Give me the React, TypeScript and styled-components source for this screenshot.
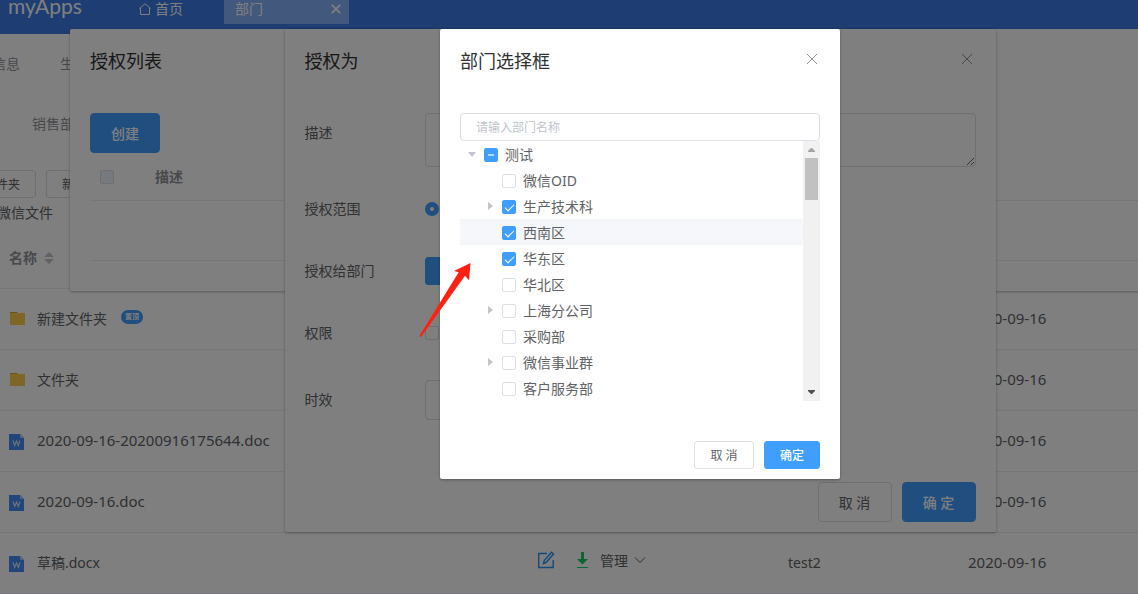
import React from "react";
import styled, { createGlobalStyle, css } from "styled-components";

const GlobalStyle = createGlobalStyle`
  * { box-sizing: border-box; }
  body {
    margin: 0;
    background: #fff;
    color: #606266;
    font: 14px/20px "Noto Sans", "Noto Sans CJK SC", sans-serif;
  }
  button, input, textarea { font-family: inherit; margin: 0; }
`;

const Viewport = styled.div`
  overflow: hidden;
  min-height: 100vh;
`;

const Shell = styled.div`
  position: relative;
  min-width: 1280px;
  min-height: 100vh;
`;

/* ---------- page header ---------- */

const Header = styled.header`
  display: flex;
  align-items: flex-start;
  height: 34px;
  background: #3c7ae4;
  color: #fff;
`;

const HeaderItem = styled.div`
  display: flex;
  align-items: center;
  height: 24px;
  padding-bottom: 6px;
`;

const Logo = styled(HeaderItem)`
  width: 139px;
  padding: 0 0 12px 8px;
  font-family: Lato, sans-serif;
  font-size: 21px;
`;

const HomeLink = styled.a`
  display: flex;
  align-items: center;
  gap: 4px;
  width: 85px;
  height: 24px;
  padding-bottom: 6px;
  color: #fff;
  text-decoration: none;
`;

const PageTab = styled(HeaderItem)`
  justify-content: space-between;
  width: 125px;
  padding: 0 8px 6px 11px;
  background: #84b0fa;
`;

const IconButton = styled.button`
  display: flex;
  padding: 0;
  border: 0;
  background: none;
  color: inherit;
`;

/* ---------- file list page ---------- */

const SubNav = styled.nav`
  display: flex;
  align-items: center;
  gap: 40px;
  height: 60px;
  margin-left: -8px;
  color: #909399;
`;

const Crumb = styled.div`
  height: 60px;
  padding-left: 32px;
  line-height: 60px;
  color: #909399;
`;

const Toolbar = styled.div`
  display: flex;
  gap: 10px;
  margin-left: -20px;
  padding-top: 16px;
`;

const Folder = styled.div`
  height: 30px;
  margin-left: -3px;
  line-height: 30px;
  color: #606266;
`;

const FileTable = styled.table`
  width: 100%;
  table-layout: fixed;
  border-collapse: separate;
  border-spacing: 0;

  th, td {
    height: 61px;
    padding: 0;
    border-bottom: 1px solid #ebeef5;
    text-align: left;
  }
  th { color: #909399; }
`;

const HeadName = styled.div`
  display: flex;
  align-items: center;
  gap: 7px;
  padding-left: 9px;
`;

const FileName = styled.div`
  display: flex;
  align-items: center;
  gap: 12px;
  padding-left: 9px;
`;

const LatinText = styled.span`
  display: block;
  padding-bottom: 2px;
  font-size: 15px;
`;

const Badge = styled.span`
  height: 14px;
  padding: 0 4px;
  margin: 0 0 4px 2px;
  border-radius: 7px;
  background: #409eff;
  color: #fff;
  font-size: 7px;
  font-weight: 700;
  line-height: 14px;
`;

const Actions = styled.div`
  display: flex;
  align-items: center;
  padding-bottom: 6px;
`;

const EditButton = styled(IconButton)`
  width: 40px;
  color: #2196f3;
`;

const DownloadButton = styled(IconButton)`
  width: 23px;
  color: #13ce66;
`;

const ManageButton = styled(IconButton)`
  align-items: center;
  gap: 6px;
  font-size: 14px;
`;

/* ---------- shared controls ---------- */

const Button = styled.button<{ $primary?: boolean; $small?: boolean; $width: number }>`
  flex: none;
  width: ${(p) => p.$width}px;
  height: ${(p) => (p.$small ? 28 : 40)}px;
  padding: 0;
  border: 1px solid ${(p) => (p.$primary ? "#409eff" : "#dcdfe6")};
  border-radius: ${(p) => (p.$small ? 3 : 4)}px;
  background: ${(p) => (p.$primary ? "#409eff" : "#fff")};
  color: ${(p) => (p.$primary ? "#fff" : "#606266")};
  font-size: ${(p) => (p.$small ? 12 : 14)}px;
  font-weight: ${(p) => (p.$primary ? 500 : 400)};
`;

const checkedBox = css`
  border-color: #409eff;
  background: #409eff;
`;

const Checkbox = styled.input.attrs({ type: "checkbox" })<{ $partial?: boolean }>`
  position: relative;
  flex: none;
  appearance: none;
  width: 14px;
  height: 14px;
  border: 1px solid #dcdfe6;
  border-radius: 2px;
  background: #fff;

  &:disabled { background: #edf2fc; }

  &:checked { ${checkedBox} }
  &:checked::after {
    content: "";
    position: absolute;
    left: 4px;
    top: 1px;
    width: 4px;
    height: 8px;
    border: solid #fff;
    border-width: 0 1px 1px 0;
    transform: rotate(45deg);
  }

  ${(p) =>
    p.$partial &&
    css`
      ${checkedBox}
      &::after {
        content: "";
        position: absolute;
        left: 3px;
        top: 5px;
        width: 6px;
        height: 2px;
        background: #b3d8ff;
      }
    `}
`;

const Radio = styled.input.attrs({ type: "radio" })`
  appearance: none;
  width: 14px;
  height: 14px;
  border: 5px solid #409eff;
  border-radius: 50%;
  background: #fff;
`;

/* ---------- dialogs ---------- */

const Layer = styled.div<{ $mask?: boolean }>`
  position: absolute;
  inset: 0;
  display: flex;
  justify-content: center;
  align-items: flex-start;
  padding-top: 29px;
  background: ${(p) => (p.$mask ? "rgba(0, 0, 0, 0.5)" : "none")};
`;

const Dialog = styled.section<{ $width: number }>`
  width: ${(p) => p.$width}px;
  border-radius: 2px;
  background: #fff;
  box-shadow: 0 1px 3px rgba(0, 0, 0, 0.3);
`;

const DialogHeader = styled.header`
  display: flex;
  justify-content: space-between;
  padding: 20px 20px 10px;
  color: #909399;
`;

const Title = styled.h2`
  margin: 0;
  color: #303133;
  font-size: 18px;
  font-weight: 400;
  line-height: 24px;
`;

const CloseButton = styled(IconButton)`
  align-items: center;
  width: 17px;
  height: 20px;
  justify-content: center;
`;

const DialogBody = styled.div`
  padding: 30px 20px;
`;

const DialogFooter = styled.footer`
  display: flex;
  justify-content: flex-end;
  gap: 10px;
  padding: 10px 20px;
`;

const GrantTable = styled.table`
  width: 100%;
  table-layout: fixed;
  border-collapse: separate;
  border-spacing: 0;

  th, td {
    padding: 0 10px;
    border-bottom: 1px solid #ebeef5;
    text-align: left;
    color: #909399;
  }
  th { height: 48px; }
  td { height: 60px; }
  input { display: block; }
`;

const FormRow = styled.div<{ $height?: number; $gap?: number; $middle?: boolean }>`
  display: flex;
  align-items: ${(p) => (p.$middle ? "center" : "flex-start")};
  height: ${(p) => p.$height ?? 40}px;
  margin-bottom: ${(p) => p.$gap ?? 22}px;
`;

const FormLabel = styled.label`
  flex: none;
  width: 120px;
  line-height: 40px;
`;

const TextArea = styled.textarea`
  flex: 1;
  height: 54px;
  border: 1px solid #dcdfe6;
  border-radius: 4px;
  background: #fff;
  resize: vertical;
`;

const TextInput = styled.input`
  flex: 1;
  height: 40px;
  border: 1px solid #dcdfe6;
  border-radius: 4px;
  background: #fff;
`;

const PeriodInput = styled(TextInput)`
  max-width: 220px;
`;

const SearchInput = styled(TextInput)`
  display: block;
  width: 100%;
  height: 28px;
  padding: 0 15px;
  font-size: 12px;

  &::placeholder { color: #c0c4cc; opacity: 1; }
`;

const TreeBox = styled.div`
  display: flex;
  height: 260px;
`;

const Tree = styled.ul`
  flex: 1;
  margin: 0;
  padding: 0;
  list-style: none;
`;

const TreeRow = styled.li<{ $child?: boolean; $active?: boolean }>`
  display: flex;
  align-items: center;
  height: 26px;
  padding: 1px 0 0 ${(p) => (p.$child ? 18 : 0)}px;
  background: ${(p) => (p.$active ? "#f5f7fa" : "none")};
`;

const Caret = styled.span<{ $kind?: "open" | "closed" }>`
  width: 24px;
  display: flex;
  justify-content: center;

  &::before {
    content: "";
    border: 4px solid transparent;
    ${(p) =>
      p.$kind === "open" &&
      css`
        border-width: 5px 4px 0;
        border-top-color: #c0c4cc;
      `}
    ${(p) =>
      p.$kind === "closed" &&
      css`
        margin-bottom: 2px;
        border-width: 4px 0 4px 5px;
        border-left-color: #c0c4cc;
      `}
  }
`;

const TreeLabel = styled.label`
  padding-left: 7px;
`;

const ScrollBar = styled.div`
  display: flex;
  flex-direction: column;
  justify-content: space-between;
  align-items: center;
  width: 17px;
  background: #f1f1f1;
`;

const ScrollTop = styled.div`
  display: flex;
  flex-direction: column;
  align-items: center;

  svg { display: block; }
`;

const ScrollThumb = styled.div`
  width: 13px;
  height: 42px;
  background: #c1c1c1;
`;

const Pointer = styled.svg`
  position: absolute;
  left: 418px;
  top: 260px;
`;

const Cross = ({ size, weight = 1 }: { size: number; weight?: number }) => (
  <svg width={size} height={size} viewBox="0 0 12 12" fill="none" stroke="currentColor" strokeWidth={weight}>
    <path d="M1 1l10 10M11 1L1 11" />
  </svg>
);

const FolderIcon = () => (
  <svg width="16" height="16" viewBox="0 0 16 16">
    <path d="M1 1h7l1 1h7v4H1z" fill="#d9a828" />
    <path d="M1 2h15v12H1z" fill="#fccf4d" />
  </svg>
);

const DocIcon = () => (
  <svg width="16" height="18" viewBox="0 0 16 18">
    <path d="M0 2h11l4 4v12H0z" fill="#478df5" />
    <path d="M11 2l4 4h-4z" fill="#a4c6fa" />
    <path d="M4 8.500l1.700 5 1.800-4.500 1.800 4.500 1.700-5" fill="none" stroke="#dce9fd" strokeWidth="1.100" />
  </svg>
);

const ScrollArrow = ({ down }: { down?: boolean }) => (
  <svg width="17" height="17" viewBox="0 0 17 17">
    <path d={down ? "M5 6h7v1l-3 3H8L5 7z" : "M5 11h7v-1L9 7H8l-3 3z"} fill={down ? "#505050" : "#a3a3a3"} />
  </svg>
);

type FileItem = { name: string; kind: "folder" | "doc"; latin?: boolean; pinned?: boolean; owner?: string };

const files: FileItem[] = [
  { name: "新建文件夹", kind: "folder", pinned: true },
  { name: "文件夹", kind: "folder" },
  { name: "2020-09-16-20200916175644.doc", kind: "doc", latin: true },
  { name: "2020-09-16.doc", kind: "doc", latin: true },
  { name: "草稿.docx", kind: "doc", owner: "test2" },
];

type Dept = { name: string; checked?: boolean; expandable?: boolean; active?: boolean };

const departments: Dept[] = [
  { name: "微信OID" },
  { name: "生产技术科", checked: true, expandable: true },
  { name: "西南区", checked: true, active: true },
  { name: "华东区", checked: true },
  { name: "华北区" },
  { name: "上海分公司", expandable: true },
  { name: "采购部" },
  { name: "微信事业群", expandable: true },
  { name: "客户服务部" },
];

const RowActions = () => (
  <Actions>
    <EditButton aria-label="编辑">
      <svg width="18" height="18" viewBox="0 0 18 18" fill="none" stroke="currentColor" strokeWidth="1.4">
        <path d="M10 2.500H1.700v14h14.500V9" />
        <path d="M6.500 12.500l.7-3L14.500 1.300l2 1.700-7.200 8.300z" />
      </svg>
    </EditButton>
    <DownloadButton aria-label="下载">
      <svg width="11" height="17" viewBox="0 0 11 17" fill="currentColor">
        <path d="M4 0h3v7h4l-5.500 5.500L0 7h4zM0 15h11v1H0z" />
      </svg>
    </DownloadButton>
    <ManageButton>
      管理
      <svg width="12" height="8" viewBox="0 0 12 8" fill="none" stroke="currentColor">
        <path d="M1 1.500l5 5 5-5" />
      </svg>
    </ManageButton>
  </Actions>
);

const FilePage = () => (
  <>
    <Header>
      <Logo>myApps</Logo>
      <HomeLink href="#">
        <svg width="12" height="12" viewBox="0 0 12 12" fill="none" stroke="currentColor">
          <path d="M.5 5.500L6 .7l5.500 4.800M1.500 5v6.500h9V5" />
        </svg>
        首页
      </HomeLink>
      <PageTab>
        部门
        <IconButton aria-label="关闭标签">
          <Cross size={10} weight={2} />
        </IconButton>
      </PageTab>
    </Header>
    <SubNav>
      <span>信息</span>
      <span>生</span>
    </SubNav>
    <Crumb>销售部</Crumb>
    <Toolbar>
      <Button $small $width={56}>件夹</Button>
      <Button $small $width={56}>新建</Button>
    </Toolbar>
    <Folder>微信文件</Folder>
    <FileTable>
      <colgroup>
        <col style={{ width: 537 }} />
        <col style={{ width: 251 }} />
        <col style={{ width: 180 }} />
        <col />
      </colgroup>
      <thead>
        <tr>
          <th>
            <HeadName>
              名称
              <svg width="10" height="12" viewBox="0 0 10 12" fill="#c0c4cc">
                <path d="M0 5l5-5 5 5zM0 7h10l-5 5z" />
              </svg>
            </HeadName>
          </th>
          <th />
          <th />
          <th />
        </tr>
      </thead>
      <tbody>
        {files.map((f) => (
          <tr key={f.name}>
            <td>
              <FileName>
                {f.kind === "folder" ? <FolderIcon /> : <DocIcon />}
                {f.latin ? <LatinText>{f.name}</LatinText> : <span>{f.name}</span>}
                {f.pinned && <Badge>置顶</Badge>}
              </FileName>
            </td>
            <td>{f.owner && <RowActions />}</td>
            <td>{f.owner}</td>
            <td>
              <LatinText as="time">2020-09-16</LatinText>
            </td>
          </tr>
        ))}
      </tbody>
    </FileTable>
  </>
);

const GrantListDialog = () => (
  <Dialog $width={1140}>
    <DialogHeader>
      <Title>授权列表</Title>
    </DialogHeader>
    <DialogBody>
      <Button $primary $width={70}>创建</Button>
      <GrantTable>
        <colgroup>
          <col style={{ width: 55 }} />
          <col />
        </colgroup>
        <thead>
          <tr>
            <th>
              <Checkbox disabled aria-label="全选" />
            </th>
            <th>描述</th>
          </tr>
        </thead>
        <tbody>
          <tr>
            <td colSpan={2} />
          </tr>
        </tbody>
      </GrantTable>
    </DialogBody>
  </Dialog>
);

const GrantDialog = () => (
  <Dialog $width={711}>
    <DialogHeader>
      <Title>授权为</Title>
      <CloseButton aria-label="关闭">
        <Cross size={12} />
      </CloseButton>
    </DialogHeader>
    <DialogBody>
      <FormRow $height={54}>
        <FormLabel htmlFor="desc">描述</FormLabel>
        <TextArea id="desc" />
      </FormRow>
      <FormRow $middle>
        <FormLabel htmlFor="scope">授权范围</FormLabel>
        <Radio id="scope" defaultChecked />
      </FormRow>
      <FormRow $middle>
        <FormLabel htmlFor="dept">授权给部门</FormLabel>
        <Button id="dept" aria-label="选择部门" $primary $small $width={80} />
      </FormRow>
      <FormRow $middle $gap={27}>
        <FormLabel htmlFor="right">权限</FormLabel>
        <Checkbox id="right" />
      </FormRow>
      <FormRow $middle>
        <FormLabel htmlFor="period">时效</FormLabel>
        <PeriodInput id="period" />
      </FormRow>
    </DialogBody>
    <DialogFooter>
      <Button $width={74}>取 消</Button>
      <Button $primary $width={74}>确 定</Button>
    </DialogFooter>
  </Dialog>
);

const DepartmentDialog = () => (
  <Dialog $width={400} role="dialog" aria-label="部门选择框">
    <DialogHeader>
      <Title>部门选择框</Title>
      <CloseButton aria-label="关闭">
        <Cross size={12} />
      </CloseButton>
    </DialogHeader>
    <DialogBody>
      <SearchInput aria-label="部门名称" placeholder="请输入部门名称" />
      <TreeBox>
        <Tree>
          <TreeRow>
            <Caret $kind="open" />
            <Checkbox id="root-dept" $partial />
            <TreeLabel htmlFor="root-dept">测试</TreeLabel>
          </TreeRow>
          {departments.map((d, i) => (
            <TreeRow key={d.name} $child $active={d.active}>
              <Caret $kind={d.expandable ? "closed" : undefined} />
              <Checkbox id={`dept-${i}`} defaultChecked={d.checked} />
              <TreeLabel htmlFor={`dept-${i}`}>{d.name}</TreeLabel>
            </TreeRow>
          ))}
        </Tree>
        <ScrollBar>
          <ScrollTop>
            <ScrollArrow />
            <ScrollThumb />
          </ScrollTop>
          <ScrollArrow down />
        </ScrollBar>
      </TreeBox>
    </DialogBody>
    <DialogFooter>
      <Button $small $width={60}>取 消</Button>
      <Button $small $primary $width={56}>确定</Button>
    </DialogFooter>
  </Dialog>
);

export default function App() {
  return (
    <Viewport>
      <GlobalStyle />
      <Shell>
        <FilePage />
        <Layer>
          <GrantListDialog />
        </Layer>
        <Layer>
          <GrantDialog />
        </Layer>
        <Layer $mask>
          <DepartmentDialog />
        </Layer>
        <Pointer width="54" height="80" viewBox="0 0 54 80" fill="#ff2012">
          <path d="M52.500 3L36 11l4.700 1.300L1.300 76l1.700 1L47 15.700l4 4.600z" />
        </Pointer>
      </Shell>
    </Viewport>
  );
}
